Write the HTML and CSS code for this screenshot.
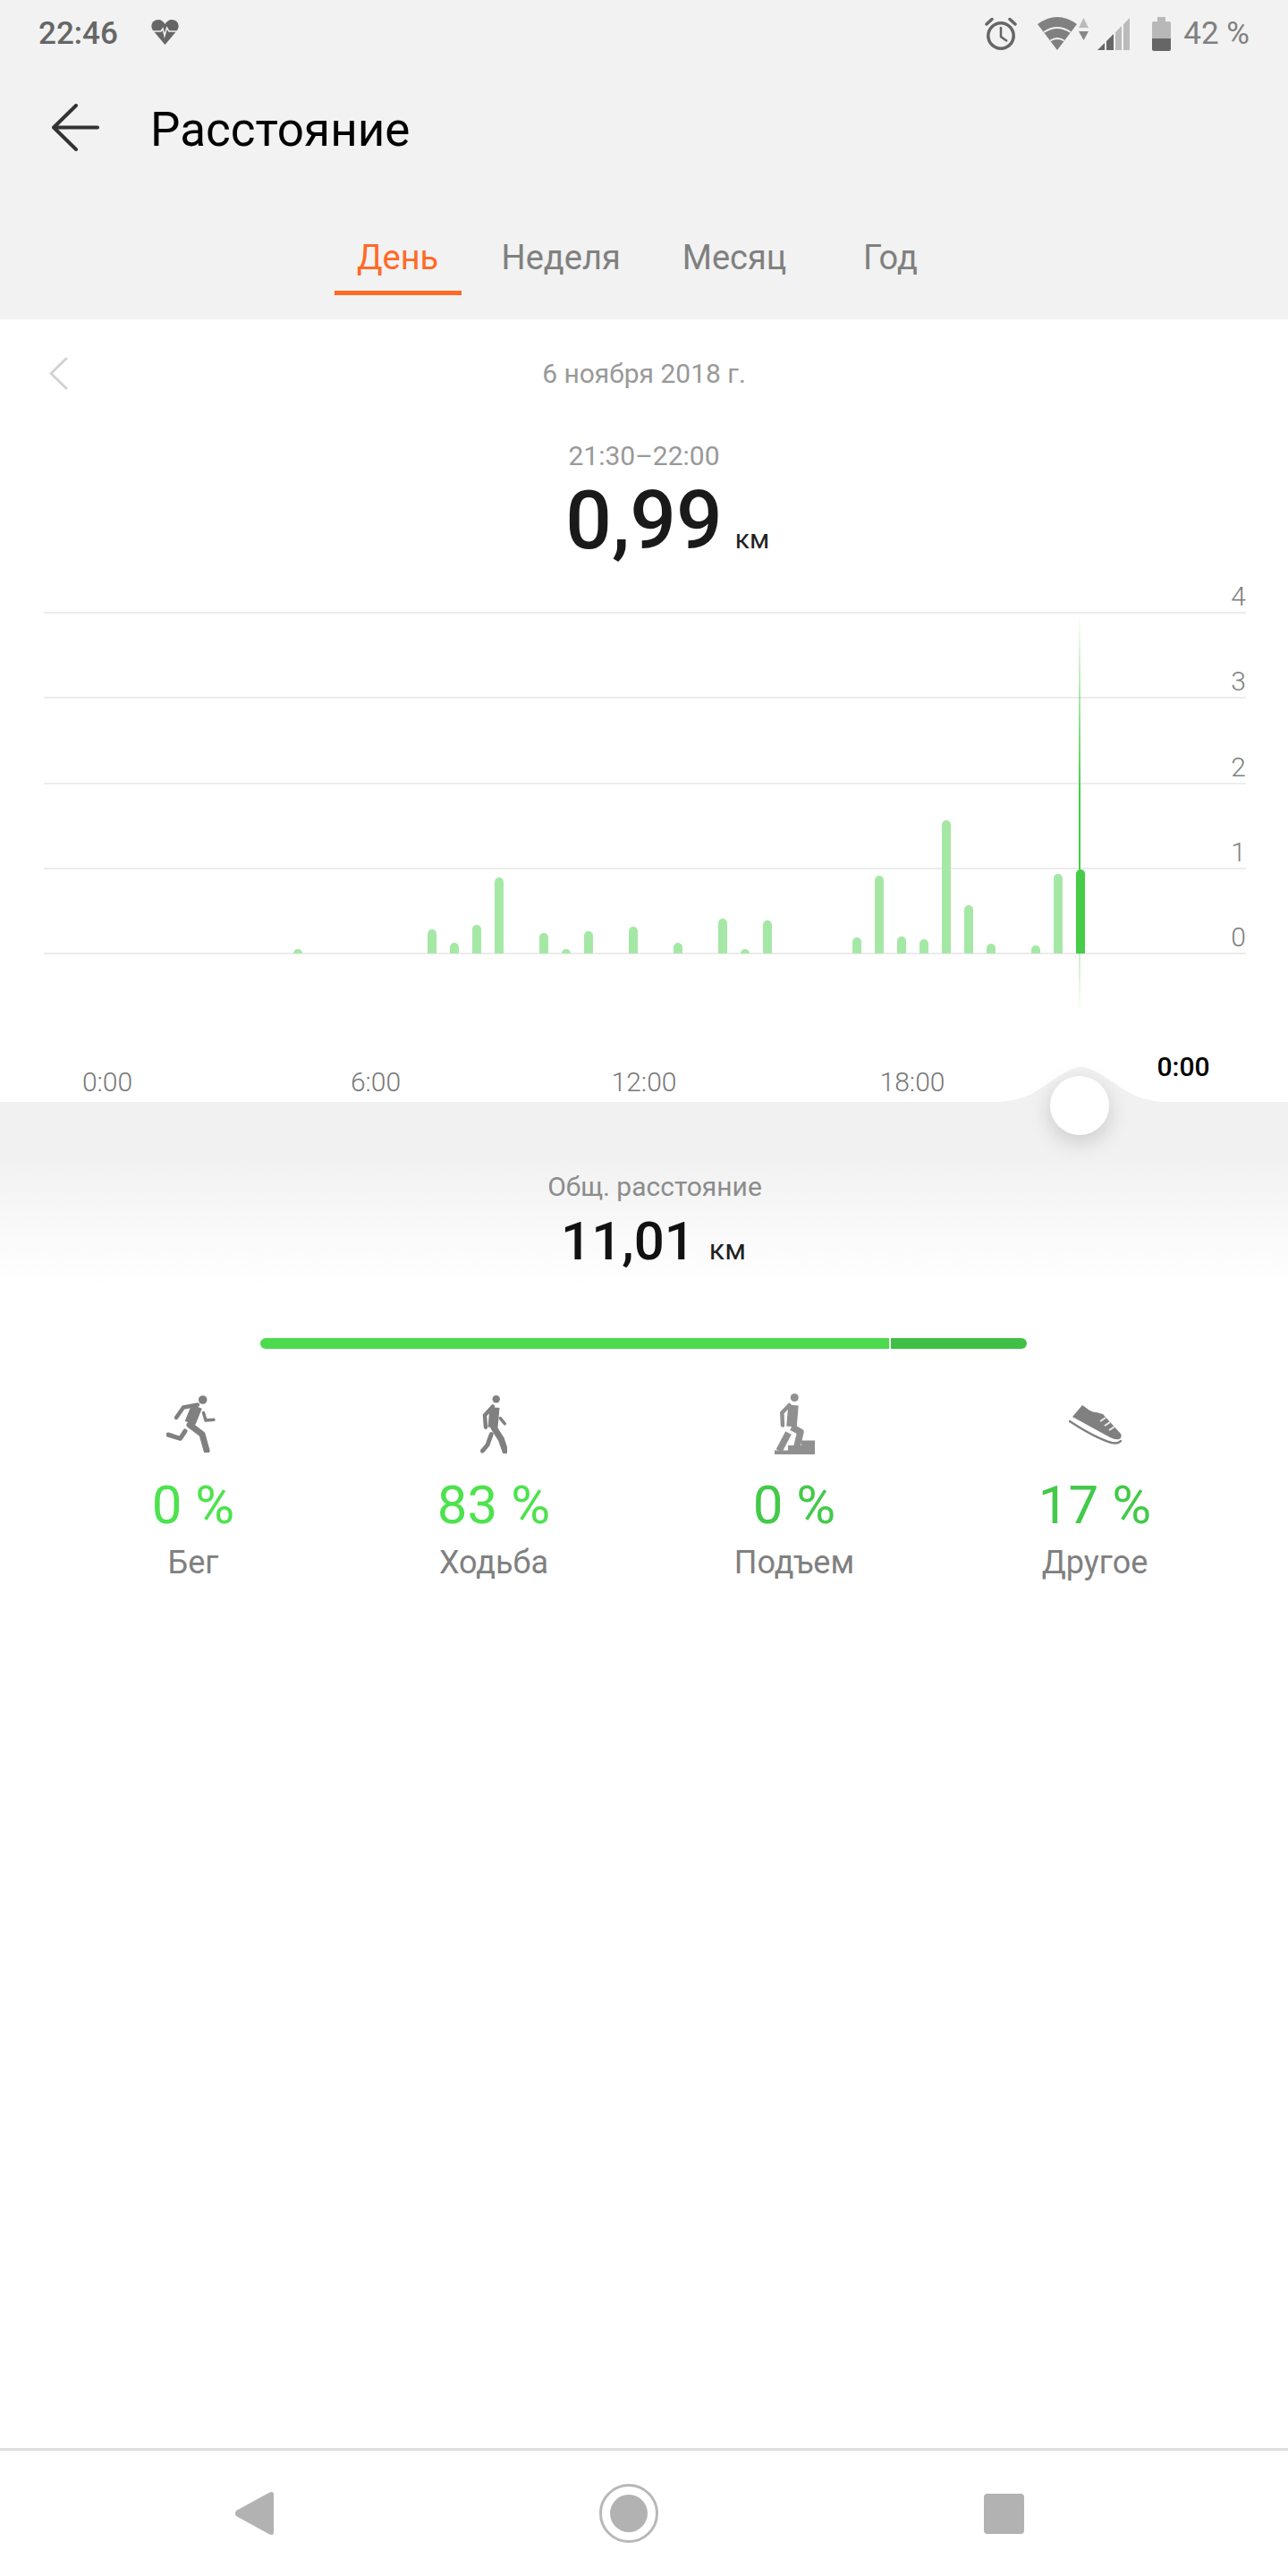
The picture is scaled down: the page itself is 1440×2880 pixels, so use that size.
FILE: index.html
```html
<!DOCTYPE html>
<html lang="ru">
<head>
    <meta charset="UTF-8">
    <meta name="viewport" content="width=device-width, initial-scale=1.0">
    <title>Расстояние</title>
    <link rel="stylesheet" href="styles.css">
</head>
<body>
    <div class="screen">
        <header class="top">
            <div class="status">
                <span class="time">22:46</span>
                <svg class="ic-heart" width="31" height="28" viewBox="0 0 31 28">
                    <path fill="#666" d="M15.5 28L2 12C-2 6 2 0 8 0c3 0 6 2 7.500 5C17 2 20 0 23 0c6 0 10 6 6 12z"/>
                    <path fill="none" stroke="#f2f2f2" stroke-width="1.500" d="M1 13h10l2-3 2 8 2.500-9 2.500 4h10"/>
                </svg>
                <svg class="ic-alarm" width="36" height="37" viewBox="0 0 36 37">
                    <circle cx="18" cy="21" r="14.200" fill="none" stroke="#666" stroke-width="3.500"/>
                    <path fill="none" stroke="#666" stroke-width="2.500" d="M18 11v11l7 5"/>
                    <path fill="none" stroke="#666" stroke-width="3.500" stroke-linecap="round" d="M2 8l6-5.500M28 2.500L34 8"/>
                </svg>
                <svg class="ic-wifi" width="57" height="37" viewBox="0 0 57 37">
                    <path fill="#808080" d="M22 37L0 8Q22-8 44 8z"/>
                    <path fill="none" stroke="#f2f2f2" stroke-width="1.800" d="M7 17Q22 7 37 17M14.200 26.600Q22 21.400 29.800 26.600"/>
                    <path fill="#bbb" d="M51.500 1L57 12H46z"/>
                    <path fill="#888" d="M46 16h11l-5.500 10z"/>
                </svg>
                <svg class="ic-signal" width="36" height="36" viewBox="0 0 36 36">
                    <path fill="#666" d="M0 36l8-8v8zM10 26l8-8v18h-8z"/>
                    <path fill="#bbb" d="M20 16l7-7v27h-7zM29 7l7-7v36h-7z"/>
                </svg>
                <svg class="ic-battery" width="21" height="38" viewBox="0 0 21 38">
                    <path fill="#b8b8b8" d="M6 0h9v5h4q2 0 2 2v17H0V7q0-2 2-2h4z"/>
                    <path fill="#666" d="M0 24h21v12q0 2-2 2H2q-2 0-2-2z"/>
                </svg>
                <span class="battery-text">42 %</span>
            </div>

            <div class="toolbar">
                <svg class="back" width="53" height="53" viewBox="0 0 53 53">
                    <path fill="none" stroke="#333" stroke-width="4" stroke-linecap="round" stroke-linejoin="round" d="M51 26.500H2M27 2L2 26.500 27 51"/>
                </svg>
                <h1>Расстояние</h1>
            </div>

            <nav class="tabs">
                <span class="tab active">День</span>
                <span class="tab">Неделя</span>
                <span class="tab">Месяц</span>
                <span class="tab">Год</span>
            </nav>
        </header>

        <section class="day">
            <div class="date-row">
                <svg class="prev" width="21" height="37" viewBox="0 0 21 37">
                    <path fill="none" stroke="#d2d2d2" stroke-width="3" stroke-linecap="round" stroke-linejoin="round" d="M19 2L2 18.500 19 35"/>
                </svg>
                <span class="date">6 ноября 2018 г.</span>
            </div>
            <div class="range">21:30–22:00</div>
            <div class="value-row">
                <span class="value">0,99</span>
                <span class="unit">км</span>
            </div>

            <div class="chart">
                <div class="grid-row first">4</div>
                <div class="grid-row">3</div>
                <div class="grid-row">2</div>
                <div class="grid-row">1</div>
                <div class="grid-row">0</div>
                <div class="bars">
                    <i class="bar" style="grid-column:9;height:5px"></i>
                    <i class="bar" style="grid-column:15;height:27px"></i>
                    <i class="bar" style="grid-column:16;height:12px"></i>
                    <i class="bar" style="grid-column:17;height:32px"></i>
                    <i class="bar" style="grid-column:18;height:85px"></i>
                    <i class="bar" style="grid-column:20;height:23px"></i>
                    <i class="bar" style="grid-column:21;height:5px"></i>
                    <i class="bar" style="grid-column:22;height:25px"></i>
                    <i class="bar" style="grid-column:24;height:30px"></i>
                    <i class="bar" style="grid-column:26;height:12px"></i>
                    <i class="bar" style="grid-column:28;height:39px"></i>
                    <i class="bar" style="grid-column:29;height:5px"></i>
                    <i class="bar" style="grid-column:30;height:37px"></i>
                    <i class="bar" style="grid-column:34;height:18px"></i>
                    <i class="bar" style="grid-column:35;height:87px"></i>
                    <i class="bar" style="grid-column:36;height:19px"></i>
                    <i class="bar" style="grid-column:37;height:16px"></i>
                    <i class="bar" style="grid-column:38;height:149px"></i>
                    <i class="bar" style="grid-column:39;height:54px"></i>
                    <i class="bar" style="grid-column:40;height:11px"></i>
                    <i class="bar" style="grid-column:42;height:9px"></i>
                    <i class="bar" style="grid-column:43;height:89px"></i>
                    <i class="bar selected" style="grid-column:44;height:94px"></i>
                </div>
            </div>

            <div class="hours">
                <span>0:00</span>
                <span>6:00</span>
                <span>12:00</span>
                <span>18:00</span>
                <span class="now">0:00</span>
            </div>
        </section>

        <section class="total">
            <svg class="bump" width="198" height="40" viewBox="0 0 198 40">
                <path fill="#f1f1f1" d="M0 40V39C30 39 45 30 62 18 80 6 90 0 99 0s19 6 37 18c17 12 32 21 62 21v1z"/>
            </svg>
            <div class="knob"></div>
            <div class="total-label">Общ. расстояние</div>
            <div class="total-value">11,01 <span class="unit">км</span></div>
        </section>

        <div class="split">
            <div class="split-walk"></div>
            <div class="split-other"></div>
        </div>

        <section class="stats">
            <div class="stat">
                <div class="stat-icon run">
                    <svg width="55" height="64" viewBox="0 0 55 64" fill="none" stroke="#808080" stroke-linecap="round" stroke-linejoin="round">
                        <circle cx="40.700" cy="5" r="4.800" fill="#808080" stroke="none"/>
                        <path stroke-width="4.500" d="M11 25l8-11.500 16-3"/>
                        <path stroke-width="12.500" stroke-linecap="butt" d="M34 12.500L26.500 31"/>
                        <path stroke-width="7" d="M26 33l14 10.500 5 18"/>
                        <path stroke-width="5" d="M21 40l-5.500 8.300L2 44"/>
                        <path stroke-width="3.500" d="M41.500 19.500L44 28l9-.700"/>
                    </svg>
                </div>
                <div class="pct">0 %</div>
                <div class="stat-name">Бег</div>
            </div>
            <div class="stat">
                <div class="stat-icon">
                    <svg width="30" height="65" viewBox="0 0 30 65" fill="none" stroke="#808080" stroke-linecap="round" stroke-linejoin="round">
                        <circle cx="17.700" cy="4.200" r="4.200" fill="#808080" stroke="none"/>
                        <path stroke-width="11" stroke-linecap="butt" d="M16 13.500L14 36"/>
                        <path stroke-width="4.500" d="M14 12.500L5 22.300l1 13.400"/>
                        <path stroke-width="7" d="M15 36l8.300 13 4.500 13"/>
                        <path stroke-width="5" d="M12.300 43.500L8 55.500 2.500 62"/>
                        <path stroke-width="3.500" d="M22.300 25.700l5 6"/>
                    </svg>
                </div>
                <div class="pct">83 %</div>
                <div class="stat-name">Ходьба</div>
            </div>
            <div class="stat">
                <div class="stat-icon">
                    <svg width="45" height="69" viewBox="0 0 45 69" fill="none" stroke="#909090" stroke-linecap="round" stroke-linejoin="round">
                        <circle cx="22.300" cy="4.500" r="4.500" fill="#909090" stroke="none"/>
                        <path stroke-width="11.500" stroke-linecap="butt" d="M21 13L19 37"/>
                        <path stroke-width="4.500" d="M16.500 13L8.300 21.500 9 35.500"/>
                        <path stroke-width="7.500" stroke-linecap="butt" d="M19 37.500l10 5.500-4 16"/>
                        <path stroke-width="7.500" stroke-linecap="butt" d="M15.500 44L5 64"/>
                        <path fill="#909090" stroke="none" d="M30 52.500h15V68H0v-4.500h15V58h15z"/>
                    </svg>
                </div>
                <div class="pct deep">0 %</div>
                <div class="stat-name">Подъем</div>
            </div>
            <div class="stat">
                <div class="stat-icon">
                    <svg width="59" height="45" viewBox="0 0 59 45">
                        <path fill="#808080" d="M4 14L15 1c5 3 9 8 16 8l7 2 20 22q2 4-2 6-4 1-10-2z"/>
                        <path fill="none" stroke="#f2f2f2" stroke-width="1.800" d="M41 15l-6 4M46 20l-6 4M51 25l-6 4"/>
                        <path fill="none" stroke="#808080" stroke-width="2.500" stroke-linecap="round" d="M1 19q29 19 47 24 7 1.500 10-2"/>
                    </svg>
                </div>
                <div class="pct deep">17 %</div>
                <div class="stat-name">Другое</div>
            </div>
        </section>

        <footer class="navbar">
            <div class="nav-item">
                <svg width="43" height="48" viewBox="0 0 43 48">
                    <path fill="#b2b2b2" d="M38.500.500Q43-1 43 3v42q0 4-4.500 2.500L1 27q-2-3 0-6z"/>
                </svg>
            </div>
            <div class="nav-item">
                <svg width="66" height="66" viewBox="0 0 66 66">
                    <circle cx="33" cy="33" r="31.500" fill="none" stroke="#b8b8b8" stroke-width="3"/>
                    <circle cx="33" cy="33" r="21" fill="#b2b2b2"/>
                </svg>
            </div>
            <div class="nav-item">
                <div class="nav-square"></div>
            </div>
        </footer>
    </div>
</body>
</html>
```

FILE: styles.css
```css
body {
    margin: 0;
    background: #fff;
    font-family: Roboto, "Noto Sans", sans-serif;
}

.screen {
    display: flex;
    flex-direction: column;
    width: 1440px;
    height: 2880px;
    overflow: hidden;
}

/* top grey area */
.top {
    background: #f2f2f2;
    padding-bottom: 27px;
}

.status {
    display: flex;
    align-items: center;
    height: 75px;
    padding: 0 43px;
}

.time {
    font-size: 35px;
    font-weight: 500;
    color: #666;
}

.ic-heart {
    margin: -3px 0 0 37px;
}

.ic-alarm {
    margin-left: auto;
}

.ic-wifi {
    margin-left: 23px;
}

.ic-signal {
    margin-left: 10px;
}

.ic-battery {
    margin-left: 25px;
}

.battery-text {
    margin-left: 14px;
    font-size: 35px;
    color: #808080;
}

.toolbar {
    display: flex;
    align-items: center;
    height: 140px;
    padding-left: 58px;
}

.back {
    margin: 0 57px 5px 0;
}

h1 {
    margin: 0;
    font-size: 53px;
    font-weight: 400;
    color: #000;
}

.tabs {
    display: flex;
    justify-content: center;
    gap: 21px;
    margin-top: 35px;
}

.tab {
    min-width: 142px;
    box-sizing: border-box;
    padding: 2px 24px 1px;
    border-bottom: 5px solid transparent;
    font-size: 38px;
    line-height: 72px;
    text-align: center;
    color: #808080;
}

.tab.active {
    color: #ff6a26;
    border-bottom-color: #ff6a26;
}

/* day reading + chart */
.date-row {
    display: grid;
    grid-template-columns: 1fr auto 1fr;
    align-items: center;
    height: 120px;
}

.prev {
    margin-left: 55px;
}

.date,
.range {
    font-size: 30px;
    color: #999;
}

.range {
    margin-top: 8px;
    line-height: 50px;
    text-align: center;
}

.value-row {
    display: grid;
    grid-template-columns: 1fr auto 1fr;
    align-items: baseline;
}

.value {
    grid-column: 2;
    font-size: 91px;
    font-weight: 500;
    line-height: 94px;
    color: #1a1a1a;
}

.unit {
    font-size: 30px;
    color: #222;
}

.value-row .unit {
    margin-left: 14px;
}

.chart {
    position: relative;
    margin: 0 47px 0 49px;
}

.grid-row {
    display: flex;
    align-items: flex-end;
    justify-content: flex-end;
    box-sizing: border-box;
    height: 95.25px;
    border-bottom: 2px solid #ececec;
    font-size: 30px;
    font-weight: 300;
    line-height: 34px;
    color: #808080;
}

.grid-row.first {
    height: 57px;
}

.bars {
    position: absolute;
    top: 0;
    left: 71px;
    display: grid;
    grid-template-columns: repeat(48, 25px);
    align-items: end;
    justify-items: center;
    height: 437px;
}

.bar {
    grid-row: 1;
    width: 10px;
    border-radius: 5px 5px 0 0;
    background: #a5e8a6;
}

.bar.selected {
    position: relative;
    background: #46cc46;
}

.bar.selected::before,
.bar.selected::after {
    content: "";
    position: absolute;
    left: 3px;
    width: 2px;
}

.bar.selected::before {
    bottom: 100%;
    height: 285px;
    background: linear-gradient(rgba(70, 204, 70, 0), #46cc46 70%);
}

.bar.selected::after {
    top: 100%;
    height: 67px;
    background: linear-gradient(rgba(70, 204, 70, 0.3), rgba(70, 204, 70, 0));
}

.hours {
    display: flex;
    justify-content: space-between;
    align-items: flex-end;
    box-sizing: border-box;
    height: 165px;
    padding: 0 60px 5px;
}

.hours span {
    width: 120px;
    font-size: 30px;
    font-weight: 300;
    line-height: 34px;
    text-align: center;
    color: #777;
}

.hours .now {
    margin: 0 -3px 17px 3px;
    font-weight: 500;
    color: #000;
}

/* totals */
.total {
    position: relative;
    box-sizing: border-box;
    height: 205px;
    padding-top: 75px;
    text-align: center;
    background: linear-gradient(#f1f1f1 60px, #fff 205px);
}

.bump {
    position: absolute;
    top: -39px;
    left: 1110px;
}

.knob {
    position: absolute;
    top: -29px;
    left: 1174px;
    width: 66px;
    height: 66px;
    border-radius: 50%;
    background: #fff;
    box-shadow: 0 8px 24px rgba(0, 0, 0, 0.16);
}

.total-label {
    padding-left: 24px;
    font-size: 30px;
    line-height: 40px;
    color: #8c8c8c;
}

.total-value {
    margin-top: 6px;
    padding-left: 21px;
    font-size: 60px;
    font-weight: 500;
    line-height: 70px;
    color: #111;
}

.total-value .unit {
    margin-left: 1px;
    font-size: 32px;
    font-weight: 400;
}

.split {
    display: flex;
    gap: 2px;
    margin: 59px 0 0 291px;
    height: 12px;
}

.split-walk {
    width: 703px;
    border-radius: 6px 0 0 6px;
    background: #4cda4e;
}

.split-other {
    width: 152px;
    border-radius: 0 6px 6px 0;
    background: #40bf46;
}

.stats {
    display: grid;
    grid-template-columns: repeat(4, 1fr);
    margin-top: 48px;
    padding: 0 48px;
    text-align: center;
}

.stat-icon {
    display: flex;
    align-items: center;
    justify-content: center;
    height: 72px;
}

.stat-icon.run {
    padding-right: 6px;
}

.pct {
    margin-top: 20px;
    font-size: 60px;
    line-height: 70px;
    color: #4de24e;
}

.pct.deep {
    color: #44c94a;
}

.stat-name {
    margin-top: 4px;
    font-size: 36px;
    line-height: 50px;
    color: #808080;
}

/* android nav bar */
.navbar {
    display: flex;
    justify-content: center;
    align-items: center;
    box-sizing: border-box;
    height: 143px;
    margin-top: auto;
    padding-right: 34px;
    border-top: 3px solid #ddd;
}

.nav-item {
    display: flex;
    justify-content: center;
    width: 419px;
}

.nav-square {
    width: 45px;
    height: 45px;
    border-radius: 4px;
    background: #b2b2b2;
}
```
